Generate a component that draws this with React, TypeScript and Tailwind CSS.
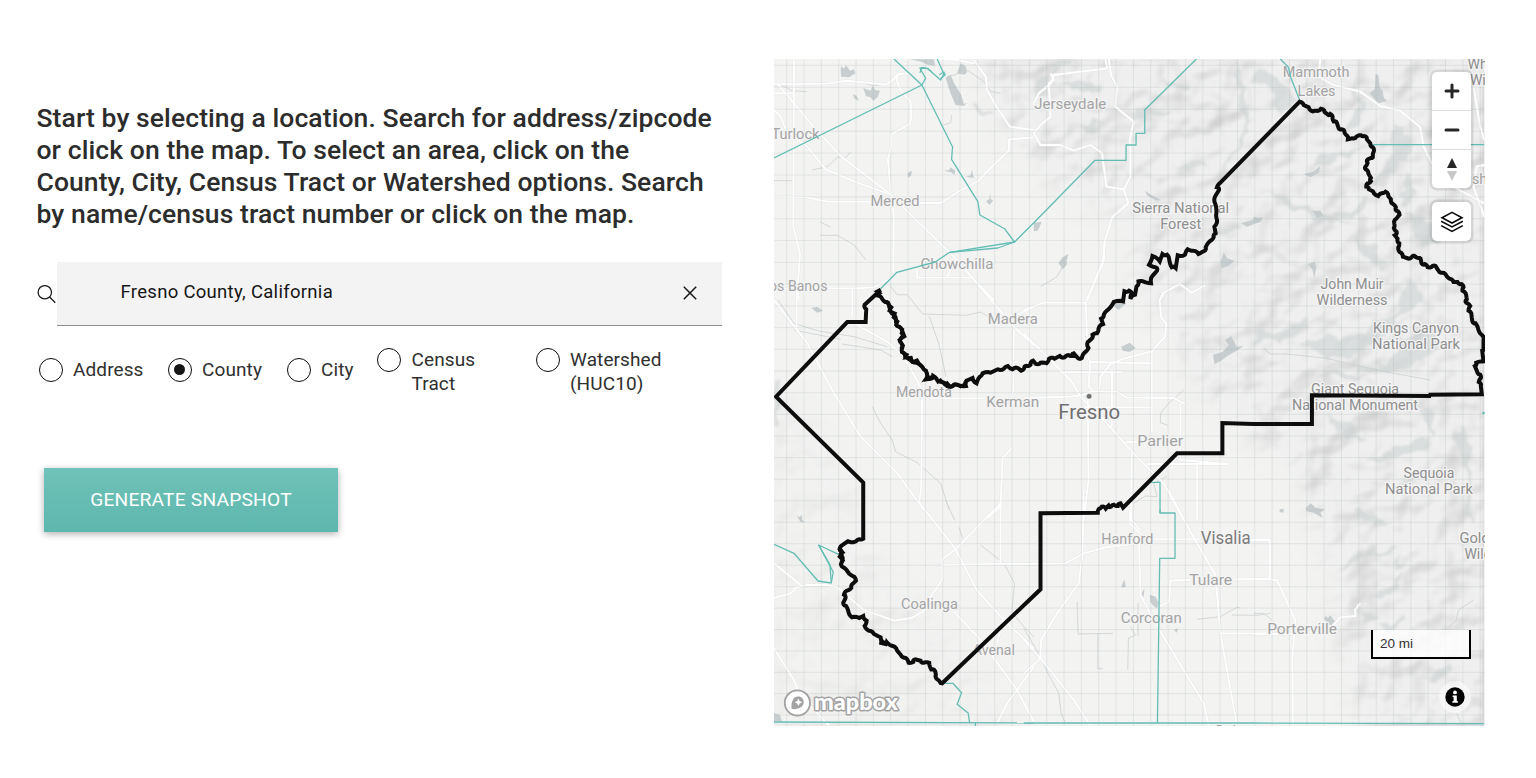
import React from 'react';

type Pt = [number, number];

/* Sheet coordinates are three units per pixel, measured from the sheet's origin. */
const sheet = (ox: number, oy: number, s: string): Pt[] =>
  s.trim().split(/\s+/).map((p) => {
    const [x, y] = p.split(',').map(Number);
    return [ox + x / 3, oy + y / 3] as Pt;
  });

const toPath = (pts: Pt[]) => 'M' + pts.map((p) => `${p[0].toFixed(1)} ${p[1].toFixed(1)}`).join('L');
const line = (ox: number, oy: number, s: string) => toPath(sheet(ox, oy, s));

/* Adds small bends to the short segments that follow rivers and ridges. */
const rough = (pts: Pt[]): Pt[] => {
  const out: Pt[] = [];
  pts.forEach((p, i) => {
    out.push(p);
    const q = pts[i + 1];
    if (!q) return;
    const dx = q[0] - p[0];
    const dy = q[1] - p[1];
    const len = Math.hypot(dx, dy);
    if (len > 2.6 && len < 9.5) {
      [0.35, 0.7].forEach((t, k) => {
        const j = (((i * 7 + k * 5) % 5) - 2) * 0.42;
        out.push([p[0] + dx * t - (dy / len) * j, p[1] + dy * t + (dx / len) * j]);
      });
    }
  });
  return out;
};

const BOUNDARY = toPath(
  rough([
    ...sheet(1254, 50, '138,155 150,165 165,172 178,184 192,183 202,176 213,186 222,193 230,192 237,200 240,214 250,219 254,232 264,238 272,243 277,254 283,268 295,265 308,260 322,256 332,258 340,268 350,280 358,292 361,304 358,318 352,324 343,328 342,338 335,350 336,358 344,370 352,384 352,394 342,400 338,410 346,418 358,424 374,438 384,430 396,425 404,438 412,448 418,462 427,472 428,482 438,494 428,506 422,520 421,534 429,545 424,556 432,566 437,580 434,592 438,606 448,620 460,624 474,622 482,617 494,624 502,630 504,640 514,642 522,651 534,651 546,648 555,662 567,668 577,674 588,686'),
    ...sheet(1254, 280, '600,6 612,6 624,12 630,22 627,32 638,46 640,58 638,68 650,78 645,92 654,106 656,122 666,130 674,148 684,164 690,180 690,210 686,212 690,244 668,248 664,258 670,272 680,284 682,294 676,306 682,318 685,343 526,344 532,348 175,346 175,432'),
    ...sheet(1024, 240, '690,552 596,549 596,640 460,640 298,803 290,790 282,798 270,794 262,800 254,797 246,806 234,800 226,806 222,818 50,820'),
    ...sheet(1024, 490, '50,298'),
    ...sheet(774, 500, '505,550 500,549 490,538 486,524 484,514 472,508 466,488 450,488 440,482 424,478 418,486 404,488 396,474 380,464 370,452 356,438 342,430 330,428 320,412 300,402 284,392 272,378 278,362 268,348 256,354 234,352 224,338 216,318 208,308 214,296 210,284 218,272 232,264 238,250 246,242 236,228 222,216 208,202 202,190 206,178 200,166 204,156 198,150 204,136 222,124 246,124 256,118 268,116'),
    ...sheet(774, 280, '268,608 6,350 220,126 275,126 277,88 272,74 320,30 310,46 322,52 334,66 344,72 348,88 360,104 366,118 370,138 384,150 390,166 378,184 386,200 384,216 394,230 410,240 428,248 446,262 456,272 458,298 470,296 478,288 490,300 504,306 520,318 526,320 540,314 556,316 576,318 578,302 596,294 608,310 618,290 626,280 650,278 672,268 690,266 702,258 716,268 732,264 742,272 752,260'),
    ...sheet(1024, 240, '10,378 20,374 28,362 36,372 50,368 68,370 76,356 92,356 108,348 122,352 134,345 146,348 150,340 162,354 174,354 182,338 194,324 192,306 202,298 206,284 220,280 224,266 238,252 232,236 240,224 254,208 270,186 298,184 302,154 316,152 324,160 320,176 334,164 338,140 344,124 358,124 382,130 386,108 400,92 396,82 376,74 386,48 408,64 416,42 430,44 436,56 444,82 456,84 462,46 484,44 492,28 508,32 524,42 540,34 546,22 558,4'),
    ...sheet(1034, 50, '540,562 546,550 542,530 550,510 548,490 545,462 544,440 556,420 550,412 558,400'),
  ]),
) + 'Z';

const DENSE = [
  line(774, 280, '320,28 308,34 318,40 306,48'),
  line(774, 280, '340,70 354,82 346,92 364,100 358,112 372,124 366,136 386,148 382,160 392,170 376,180 388,196 380,206'),
  line(774, 280, '384,216 400,224 394,234 412,232 416,246 430,240 440,258'),
  line(774, 280, '454,270 462,286 454,298 474,290 486,294 492,306 500,300 512,314 520,308 530,320 544,312 560,320 572,312 580,308'),
  line(774, 500, '322,414 320,430 336,434 338,424 346,434'),
  line(774, 500, '204,136 196,148 208,158 196,170 208,182 198,196'),
];

const COUNTIES = [
  line(774, 50, '0,324 444,105 360,27'),
  line(774, 50, '444,105 536,291 533,328 612,455 618,495 692,536 722,576 780,518'),
  line(774, 50, '722,576 527,607 484,636 369,667 320,716'),
  line(774, 50, '527,607 672,594 722,576'),
  line(774, 50, '444,105 455,85 438,54 462,56 500,90 510,72 490,27'),
  line(774, 50, '438,68 445,52 462,56 472,64'),
  line(774, 50, '496,74 510,66 514,74 500,86'),
  line(1034, 50, '0,518 184,331 277,331 277,285 307,285 307,250 333,250 333,180 488,27'),
  line(1254, 50, '80,27 104,52 112,84 138,150'),
  line(1254, 50, '356,284 692,284'),
  line(1024, 240, '382,727 409,727 409,820'),
  line(1024, 490, '409,60 409,69 454,69 454,205 408,205 401,699'),
  line(774, 500, '0,133 60,160 132,243 172,249 168,194 134,135 200,166 206,190'),
  line(774, 500, '134,135 178,216 172,249'),
  line(774, 500, '505,550 537,550 563,578 550,613 583,639 587,667'),
  line(774, 500, '0,666 780,669'),
  line(1024, 490, '0,699 691,699'),
  line(1254, 500, '0,669 692,671'),
];

const ROADS = [
  line(774, 50, '0,103 160,101 218,92 335,104 360,88 372,72 405,70 444,105'),
  line(774, 50, '0,180 20,200 36,240 100,290 155,358 245,396 345,432'),
  line(774, 50, '10,100 120,232 205,322 345,430 392,476 527,607 592,680 660,750'),
  line(774, 50, '60,30 58,530 78,610 72,700 74,750'),
  line(774, 50, '0,440 100,442 160,455 290,455'),
  line(774, 50, '436,459 500,459 562,420 615,392 640,365 705,302 706,268 780,262'),
  line(774, 50, '372,72 368,90 382,125 410,155 412,200 408,222 350,254 352,290 342,328 350,430 360,500 358,670'),
  line(774, 50, '600,30 636,80 640,120 668,170 708,230 780,240'),
  line(774, 50, '430,660 430,683 590,683'),
  line(774, 50, '540,640 520,680'),
  line(774, 50, '490,27 550,30 600,40'),
  line(774, 50, '100,715 235,715 300,712 350,685'),
  line(774, 50, '235,715 235,800'),
  line(774, 50, '0,130 60,130'),
  line(1034, 50, '215,27 220,55 60,75 52,100 15,130 0,160'),
  line(1034, 50, '50,70 60,90 45,100 50,200 20,225 0,250 20,285 80,285 120,302 170,285 205,310 218,410 270,418 284,460 236,500 214,570 208,630 160,750'),
  line(1034, 50, '225,27 232,75 250,110 245,170 300,215 288,270 290,300 290,380 270,418'),
  line(1254, 50, '200,27 195,80 240,105 320,125 380,168 440,182 500,232 510,290 535,340 600,410 692,460'),
  line(1254, 50, '660,110 680,230 692,270'),
  line(1254, 50, '692,500 660,410 670,350 692,345'),
  line(774, 280, '0,60 100,190 180,340 260,470 370,580 450,690'),
  line(774, 280, '68,30 68,150'),
  line(774, 280, '0,30 60,22 130,24'),
  line(774, 280, '240,130 340,185 390,230 445,330 442,620 436,670'),
  line(774, 280, '470,355 630,355'),
  line(774, 280, '600,0 720,140 780,195'),
  line(774, 280, '720,150 718,330 712,360'),
  line(774, 280, '780,80 730,104'),
  line(774, 280, '712,506 686,535 680,680 640,715'),
  line(1024, 240, '0,212 60,188 186,188 240,66 242,0'),
  line(1024, 240, '186,188 192,350 200,366 194,440 205,450'),
  line(1024, 240, '0,280 140,420 172,472 240,540 330,640 420,730 480,840'),
  line(1024, 240, '0,474 140,470 172,466 205,454 280,456 306,472 450,474 484,492'),
  line(1024, 240, '200,366 384,370'),
  line(1024, 240, '110,396 296,396'),
  line(1024, 240, '544,136 504,158 468,132 420,158 408,180 412,232 428,250 424,290 384,334 300,356 262,370 230,410 226,450'),
  line(1024, 240, '384,334 384,580'),
  line(1024, 240, '265,390 264,560'),
  line(1024, 240, '180,502 384,502'),
  line(1024, 240, '305,606 340,606'),
  line(1024, 240, '192,480 194,720 180,840'),
  line(1024, 240, '324,640 322,840 350,870'),
  line(1024, 240, '470,490 470,660 610,672 370,672'),
  line(1024, 240, '520,672 520,840'),
  line(774, 500, '430,0 545,148 610,272 690,360 780,445'),
  line(774, 500, '680,10 545,148 505,178 505,240 470,290 470,320 414,354 360,362 270,330 190,262 160,255 100,255 66,262 50,280 0,294'),
  line(774, 500, '0,190 80,255'),
  line(774, 500, '505,195 680,192 780,192'),
  line(774, 500, '680,0 680,192'),
  line(774, 500, '540,335 620,420 730,570 780,665'),
  line(774, 500, '780,500 730,570 700,610 670,669'),
  line(774, 500, '690,350 670,430'),
  line(774, 500, '0,445 60,540 80,590 165,676'),
  line(1024, 490, '0,450 50,505 150,630 200,707'),
  line(1024, 490, '0,550 50,505 52,450 100,370 165,280 176,190 180,0'),
  line(1024, 490, '0,222 125,220 180,190 245,172 346,160 350,315 410,425 540,640 555,707'),
  line(1024, 490, '318,60 320,102 350,130'),
  line(1024, 490, '380,148 530,148'),
  line(1024, 490, '434,0 500,125 575,255 590,430 640,707'),
  line(1024, 490, '680,150 738,150 738,265 630,268'),
  line(1024, 490, '500,270 440,272 436,335 405,350'),
  line(1024, 490, '590,430 730,430'),
  line(1254, 500, '0,118 48,118 48,238 0,238'),
  line(1254, 500, '48,238 70,240 125,360 116,480 118,676'),
  line(1254, 500, '0,402 120,402'),
  line(1254, 500, '235,380 260,352 306,348 304,330 320,310'),
];

const STREAMS = [
  line(774, 50, '0,107 30,108 52,122 100,125'),
  line(774, 50, '250,94 300,108 340,100'),
  line(774, 50, '115,360 160,350 190,322 216,322 230,306'),
  line(774, 50, '0,392 55,392'),
  line(774, 50, '138,515 170,532'),
  line(774, 50, '138,556 190,556 240,584 276,630'),
  line(774, 50, '534,195 530,218 508,225'),
  line(774, 280, '346,14 370,44 400,44 446,102 580,106 620,96 640,108'),
  line(774, 280, '466,108 494,190 508,250 516,290'),
  line(774, 280, '12,60 60,130 130,152 240,170 340,200'),
  line(774, 280, '60,150 200,178'),
  line(774, 280, '205,192 320,210 355,230'),
  line(774, 280, '295,380 320,430 355,480 365,515 430,548 500,610 526,690'),
  line(774, 500, '515,0 542,60'),
  line(774, 500, '556,82 566,115'),
  line(774, 500, '620,135 690,190 722,250 714,335 750,380 780,410'),
  line(774, 50, '520,80 540,76 580,60 630,95 650,124 680,130'),
  line(1034, 50, '100,625 70,680 20,710'),
  line(1024, 240, '480,450 435,490 410,520 410,548 432,556'),
  line(1024, 240, '330,790 365,768 400,770 390,730 430,708'),
  line(1024, 490, '160,335 163,432 268,430'),
  line(1024, 490, '222,432 222,536 236,536'),
  line(1024, 490, '343,340 343,438'),
  line(1024, 490, '320,410 335,436 314,444 312,540'),
  line(1024, 490, '520,388 590,380 640,352 650,354'),
  line(1024, 490, '625,375 700,376 740,370'),
  line(1254, 500, '0,340 30,340 55,360'),
  line(1024, 490, '0,415 50,500 70,545 105,610 112,670 125,700'),
  line(1254, 280, '30,205 50,222 100,222 220,235 300,255 420,280 530,300'),
  line(1254, 500, '610,640 625,676'),
  line(1254, 500, '660,300 615,330 608,362 585,380'),
];

const LAKES = [
  line(774, 50, '200,60 202,48 210,56 216,45 222,54 228,62 240,58 244,70 226,82 202,80'),
  line(774, 50, '268,114 290,122 296,108 304,120 318,122 312,140 298,152 290,142 276,138'),
  line(774, 50, '236,132 248,138 255,152 242,146'),
  line(774, 50, '515,84 530,74 540,98 552,118 562,134 570,162 580,158 570,168 545,165 530,130'),
  line(774, 50, '406,28 480,28 484,48 460,44 445,36'),
  line(774, 50, '560,40 575,48 580,66 572,74 550,70'),
  line(774, 50, '402,368 414,362 412,376 402,384'),
  line(774, 50, '510,362 526,360 530,352 544,362 542,374 530,366'),
  line(774, 50, '576,380 590,376 594,360 600,384'),
  line(774, 50, '636,454 646,448 650,430 650,448 658,450 648,465'),
  line(774, 280, '112,84 130,80 148,92 130,98'),
  line(1034, 50, '0,518 24,515 12,542 0,544'),
  line(1034, 50, '74,640 86,622 104,612 98,632 100,642 88,658'),
  line(1034, 50, '334,422 352,434 382,450 370,452 342,438'),
  line(1034, 50, '622,520 648,512 686,500 684,514 640,530'),
  line(1034, 50, '560,636 570,608 580,624 602,632 584,648 564,655'),
  line(1024, 240, '292,320 318,308 336,324 318,336 298,332'),
  line(1024, 240, '568,344 596,336 616,316 604,300 622,288 640,320 660,318 632,336 614,346 590,364 572,372'),
  line(1024, 240, '266,194 290,182 308,190 284,210'),
  line(1254, 50, '366,72 374,74 378,110 388,124 390,142 400,154 374,160 348,130 364,118'),
  line(1254, 50, '150,372 178,366 200,348 196,368 170,382'),
  line(1254, 50, '176,482 200,482 210,498 190,504'),
  line(1254, 50, '0,500 24,506 16,518 0,516'),
  line(1254, 50, '162,642 184,636 188,650 182,684 176,658'),
  line(1254, 280, '78,688 90,686 90,698 78,696'),
  line(1254, 280, '156,684 172,670 186,684 214,688 200,698 208,714 180,698 158,694'),
  line(1254, 500, '206,350 212,356 216,346 222,354 230,346 236,354 246,366 236,380 222,370'),
  line(774, 500, '68,46 76,52 84,44 84,58 92,68 80,66 74,58'),
  line(774, 500, '0,640 18,645 24,664 0,664'),
  line(1024, 490, '292,292 302,268 306,292'),
  line(1024, 490, '352,312 362,296 360,318 354,326'),
  line(1024, 490, '378,314 396,320 404,340 400,356 386,344 380,336'),
  line(1024, 490, '450,420 462,415 460,428'),
];

const SHADES = [
  line(1034, 50, '0,110 60,70 50,40 95,30 160,27 80,50 30,130 0,140'),
  line(1034, 50, '70,100 140,90 210,110 200,125 120,118'),
  line(1034, 50, '300,190 370,178 415,188 380,200 310,204'),
  line(1034, 50, '600,27 630,90 628,130 652,190 640,260 590,330 560,400 580,330 620,270 636,220 606,120'),
  line(1034, 50, '140,230 180,205 200,215 165,250'),
  line(1034, 50, '540,545 600,530 620,542 580,558'),
  line(1034, 50, '390,80 430,100 480,110 440,120 400,105'),
  line(1034, 50, '420,350 470,330 520,345 470,365'),
  line(774, 50, '600,160 650,190 630,200 600,180'),
  line(1254, 50, '300,100 330,160 330,210 290,240 300,170'),
  line(1254, 50, '410,220 460,230 468,300 420,370 360,400 400,340 420,280'),
  line(1254, 50, '60,420 130,460 220,500 290,530 190,512 80,450'),
  line(1254, 50, '180,345 215,310 300,295 340,300 250,320 200,355'),
  line(1254, 50, '220,500 290,480 340,440 320,490 260,510'),
  line(1254, 50, '460,370 480,430 450,470 440,430'),
  line(1254, 50, '0,60 70,80 130,150 80,200 60,120 0,90'),
  line(1254, 50, '450,490 540,510 560,580 500,590'),
  line(1254, 50, '300,560 360,590 400,660 340,630'),
  line(1254, 280, '0,190 20,135 60,160 110,140 150,110 160,150 90,180 40,175 0,205'),
  line(1254, 280, '130,200 200,170 290,180 350,140 410,110 430,90 450,10 470,0 500,10 505,70 440,110 380,180 280,235 200,230'),
  line(1254, 280, '320,260 400,250 440,180 520,140 560,200 470,260 380,280 300,280'),
  line(1254, 280, '330,545 400,510 500,480 530,470 520,510 430,530 370,550'),
  line(1254, 280, '500,380 545,400 540,470 520,430'),
  line(1254, 280, '620,430 650,500 655,730 640,700 640,560 600,470'),
  line(1254, 280, '170,280 270,275 340,290 220,292'),
  line(1254, 280, '220,400 290,430 330,490 260,460'),
  line(1254, 500, '270,215 290,180 330,140 345,160 350,130 370,155 410,135 430,150 390,165 330,165 300,200'),
  line(1254, 500, '340,300 400,270 450,215 440,250 390,290'),
  line(1254, 500, '425,200 435,150 440,180 490,198'),
  line(1254, 500, '380,380 450,350 460,365 400,390'),
  line(1254, 500, '525,530 560,500 590,485 590,520 540,550'),
  line(1254, 500, '310,330 380,350 360,365'),
  line(1254, 500, '300,30 370,50 420,70 370,80 320,60'),
  line(774, 280, '0,290 18,290 15,420 0,430'),
];

type Label = { t: string; x: number; y: number; w: number; s?: number; c?: string; m?: boolean };

/* x is the centre of the label, y its baseline. */
const LABELS: Label[] = [
  { t: 'Mammoth', x: 1316.5, y: 77, w: 67 },
  { t: 'Lakes', x: 1317, y: 95.5, w: 38 },
  { t: 'Jerseydale', x: 1070.5, y: 108.5, w: 72 },
  { t: 'Turlock', x: 795.5, y: 138.5, w: 48 },
  { t: 'Merced', x: 895, y: 205.5, w: 49 },
  { t: 'Chowchilla', x: 957, y: 268.5, w: 73 },
  { t: 'Los Banos', x: 794.5, y: 290.5, w: 66 },
  { t: 'Madera', x: 1013, y: 324, w: 50 },
  { t: 'Mendota', x: 924, y: 396.5, w: 56 },
  { t: 'Kerman', x: 1013, y: 407, w: 53 },
  { t: 'Fresno', x: 1089.5, y: 418.3, w: 62, s: 20.5, c: '#6f6f6f' },
  { t: 'Parlier', x: 1160.5, y: 445.5, w: 46 },
  { t: 'Hanford', x: 1127.5, y: 543.5, w: 52 },
  { t: 'Visalia', x: 1226, y: 543.7, w: 50, s: 17.8, c: '#7c7c7c' },
  { t: 'Tulare', x: 1211, y: 585, w: 43 },
  { t: 'Corcoran', x: 1151.5, y: 623, w: 61 },
  { t: 'Coalinga', x: 929.5, y: 608.5, w: 57 },
  { t: 'Avenal', x: 994, y: 655, w: 42 },
  { t: 'Porterville', x: 1302.5, y: 634, w: 70 },
  { t: 'Bishop', x: 1482, y: 184, w: 44 },
  { t: 'Delano', x: 1238, y: 735.5, w: 44 },
  { t: 'Sierra National', x: 1181, y: 213, w: 97, m: true },
  { t: 'Forest', x: 1181, y: 229, w: 41, m: true },
  { t: 'John Muir', x: 1352.5, y: 289, w: 63, m: true },
  { t: 'Wilderness', x: 1352.5, y: 305, w: 71, m: true },
  { t: 'Kings Canyon', x: 1416.5, y: 332.5, w: 86, m: true },
  { t: 'National Park', x: 1416.5, y: 348.5, w: 88, m: true },
  { t: 'Giant Sequoia', x: 1355.5, y: 393.5, w: 88, m: true },
  { t: 'National Monument', x: 1355.5, y: 409.5, w: 126, m: true },
  { t: 'Sequoia', x: 1429.5, y: 477.5, w: 51, m: true },
  { t: 'National Park', x: 1429.5, y: 493.5, w: 88, m: true },
  { t: 'White', x: 1486, y: 69, w: 36, m: true },
  { t: 'Wild', x: 1484, y: 85, w: 27, m: true },
  { t: 'Golden', x: 1483, y: 542.5, w: 46, m: true },
  { t: 'Wild', x: 1478.5, y: 558.5, w: 27, m: true },
];

const COLS = Array.from({ length: 41 }, (_, i) => 786.7 + i * 17.35);
const ROWS = Array.from({ length: 31 }, (_, k) => 65.3 + 22 * k - 0.0115 * k * k);

function BaseMap() {
  return (
    <svg className="block h-full w-full" viewBox="774 59 711 667" preserveAspectRatio="none">
      <defs>
        <filter id="relief" x="0" y="0" width="100%" height="100%" colorInterpolationFilters="sRGB">
          <feTurbulence type="fractalNoise" baseFrequency="0.022 0.026" numOctaves={3} seed={11} />
          <feColorMatrix values="0 0 0 0 0  0 0 0 0 0  0 0 0 0 0  1 0 0 0 0" />
          <feGaussianBlur stdDeviation={0.8} />
          <feDiffuseLighting surfaceScale={16} diffuseConstant={1.14} lightingColor="#ffffff">
            <feDistantLight azimuth={225} elevation={60} />
          </feDiffuseLighting>
          <feGaussianBlur stdDeviation={0.8} />
          <feColorMatrix values="0.13 0 0 0 0.806  0 0.13 0 0 0.807  0 0 0.13 0 0.806  0 0 0 1 0" />
        </filter>
        <filter id="soft" x="-20%" y="-20%" width="140%" height="140%">
          <feGaussianBlur stdDeviation={14} />
        </filter>
        <filter id="fine" filterUnits="userSpaceOnUse" x="774" y="59" width="711" height="667" colorInterpolationFilters="sRGB">
          <feTurbulence type="fractalNoise" baseFrequency="0.07" numOctaves={2} seed={4} result="n" />
          <feDisplacementMap in="SourceGraphic" in2="n" scale={16} xChannelSelector="R" yChannelSelector="G" />
          <feGaussianBlur stdDeviation={0.8} />
        </filter>
        <mask id="mountains" maskUnits="userSpaceOnUse" x="774" y="59" width="711" height="667">
          <g filter="url(#soft)">
            <path fill="#fff" d="M975 30H1520V760H1375L1340 640L1330 560L1300 480L1250 430L1200 390L1175 330L1140 290L1130 220L1060 190L1000 120Z" />
            <path fill="#555" d="M740 380L790 390L850 480L860 540L900 580L960 650L1010 700L1000 760H740Z" />
          </g>
        </mask>
      </defs>

      <rect x="774" y="59" width="711" height="667" fill="#f3f3f2" />
      <rect x="774" y="59" width="711" height="667" filter="url(#relief)" mask="url(#mountains)" />
      <g fill="#cfd3d3" fillOpacity={0.62} filter="url(#fine)">
        {SHADES.map((d) => <path key={d} d={d + 'Z'} />)}
      </g>
      <g fill="#c3cacc" fillOpacity={0.9}>
        {LAKES.map((d) => <path key={d} d={d + 'Z'} />)}
      </g>
      <g fill="none" stroke="#cdd1d2" strokeWidth={0.8}>
        {STREAMS.map((d) => <path key={d} d={d} />)}
      </g>
      <g fill="none" stroke="#e8e8e8" strokeWidth={2.8} strokeLinejoin="round">
        {ROADS.map((d) => <path key={d} d={d} />)}
      </g>
      <g fill="none" stroke="#ffffff" strokeWidth={1.8} strokeLinejoin="round">
        {ROADS.map((d) => <path key={d} d={d} />)}
      </g>
      <g stroke="#8fa39f" strokeOpacity={0.2} strokeWidth={0.9}>
        {COLS.map((x) => <line key={x} x1={x} x2={x} y1={59} y2={726} />)}
        {ROWS.map((y) => <line key={y} x1={774} x2={1485} y1={y} y2={y} />)}
      </g>

      <g
        fontFamily="Roboto, 'Liberation Sans', sans-serif"
        textAnchor="middle"
        stroke="#f5f5f5"
        strokeOpacity={0.9}
        strokeWidth={2.6}
        strokeLinejoin="round"
        paintOrder="stroke"
      >
        {LABELS.map((l, i) => (
          <text
            key={i}
            x={l.x}
            y={l.y + 0.4}
            textLength={l.w}
            lengthAdjust="spacingAndGlyphs"
            fontSize={l.s ?? (l.m ? 14.2 : 14.8)}
            fontWeight={400}
            fill={l.c ?? (l.m ? '#8e8e8e' : '#a3a3a3')}
          >
            {l.t}
          </text>
        ))}
      </g>
      <circle cx="1089.3" cy="396.3" r="2.8" fill="#6f6f6f" stroke="#fff" strokeWidth={0.6} />

      <g fill="none" stroke="#63bdb3" strokeWidth={1.3} strokeLinejoin="round">
        {COUNTIES.map((d) => <path key={d} d={d} />)}
        <path d="M975.5 723V726" />
      </g>
      <circle cx="1484" cy="413" r="1.3" fill="#63bdb3" />
      <g fill="none" stroke="#0d0d0d" strokeLinejoin="miter">
        <path d={BOUNDARY} strokeWidth={4} strokeMiterlimit={3} />
        {DENSE.map((d) => <path key={d} d={d} strokeWidth={3} />)}
      </g>
    </svg>
  );
}

function MapboxLogo() {
  return (
    <svg className="absolute bottom-[5px] left-[8px]" width="120" height="34" viewBox="0 0 120 34">
      <circle cx="15.4" cy="15.9" r="12.6" fill="#fff" stroke="#a3a3a3" strokeWidth="1.8" />
      <path
        d="M9.7 22.1C9.1 18.3 9.4 14.5 11.4 11.9C13.5 9.3 17.5 8.7 20 11.1C22.6 13.6 22.2 17.4 19.8 19.5C17.1 21.8 13.4 22.4 9.7 22.1Z"
        fill="#a3a3a3"
      />
      <path d="M16.4 11.5L17.6 14.1L20.2 15.3L17.6 16.5L16.4 19.1L15.2 16.5L12.6 15.3L15.2 14.1Z" fill="#fff" />
      <text
        x="32"
        y="22.6"
        fontFamily="Lato, 'Open Sans', sans-serif"
        fontWeight={900}
        fontSize="22.5"
        textLength="84"
        lengthAdjust="spacingAndGlyphs"
        fill="#fff"
        stroke="#a3a3a3"
        strokeWidth="3"
        strokeLinejoin="round"
        paintOrder="stroke"
      >
        mapbox
      </text>
    </svg>
  );
}

function MapControls() {
  return (
    <div className="absolute top-[13px] right-[13.5px] flex w-[39px] flex-col gap-[14px]">
      <div className="flex h-[116px] flex-col divide-y divide-[#ddd] rounded-[5px] bg-white shadow-[0_0_0_2.5px_rgba(0,0,0,0.1)]">
        <button aria-label="Zoom in" className="flex flex-1 items-center justify-center">
          <svg width="16" height="16" viewBox="0 0 16 16" stroke="#262626" strokeWidth="3" strokeLinecap="round">
            <path d="M8 2V14M2 8H14" />
          </svg>
        </button>
        <button aria-label="Zoom out" className="flex flex-1 items-center justify-center">
          <svg width="16" height="16" viewBox="0 0 16 16" stroke="#262626" strokeWidth="3" strokeLinecap="round">
            <path d="M2 8H14" />
          </svg>
        </button>
        <button aria-label="Reset bearing" className="flex flex-1 items-center justify-center">
          <svg width="12" height="24" viewBox="0 0 12 24">
            <path d="M1 11L6 1L11 11Z" fill="#262626" />
            <path d="M1 14L6 24L11 14Z" fill="#c8c8c8" />
          </svg>
        </button>
      </div>
      <button
        aria-label="Layers"
        className="flex h-[39px] items-center justify-center rounded-[5px] bg-white shadow-[0_0_0_2.5px_rgba(0,0,0,0.1)]"
      >
        <svg width="24" height="22" viewBox="0 0 24 22" fill="none" stroke="#0d0d0d" strokeWidth="1.6">
          <path d="M12 1.4L22 6.7L12 12L2 6.7Z" />
          <path d="M1.2 10.2L12 15.9L22.8 10.2" />
          <path d="M1.2 14.6L12 20.4L22.8 14.6" />
        </svg>
      </button>
    </div>
  );
}

function RadioOption({ label, checked = false }: { label: React.ReactNode; checked?: boolean }) {
  return (
    <label className="flex items-start gap-[10.5px]">
      <span className="flex size-6 shrink-0 items-center justify-center rounded-full border-[1.25px] border-[#0d0d0d]">
        {checked && <span className="size-[11px] rounded-full bg-[#161616]" />}
      </span>
      <span className="text-[19px] leading-6 tracking-[0.1px] whitespace-nowrap text-[#303030]">{label}</span>
    </label>
  );
}

export default function App() {
  return (
    <main className="flex h-[778px] w-[1536px] items-start overflow-hidden bg-white font-[Roboto,'Liberation_Sans',sans-serif]">
      <section className="w-[774px] shrink-0 pt-[102px] pl-[36.5px]">
        <h1 className="text-[26.5px] leading-8 font-medium tracking-[0.08px] whitespace-nowrap text-[#2c2c2c]">
          Start by selecting a location. Search for address/zipcode
          <br />
          or click on the map. To select an area, click on the
          <br />
          County, City, Census Tract or Watershed options. Search
          <br />
          by name/census tract number or click on the map.
        </h1>

        <div className="mt-[31.5px] flex items-center">
          <svg className="shrink-0" width="20" height="20" viewBox="0 0 20 20" fill="none" stroke="#161616" strokeWidth="1.25">
            <circle cx="7.8" cy="8.2" r="6.7" />
            <path d="M12.6 13L18.3 18.7" />
          </svg>
          <div className="flex h-[64px] w-[665.5px] items-center justify-between border-b-[1.5px] border-[#8d8d8d] bg-[#f3f3f3] pr-[25px] pl-[64px]">
            <span className="text-[18.5px] tracking-[0.3px] text-[#161616]">Fresno County, California</span>
            <svg width="14" height="14" viewBox="0 0 14 14" stroke="#161616" strokeWidth="1.5">
              <path d="M0.8 0.8L13.2 13.2M13.2 0.8L0.8 13.2" />
            </svg>
          </div>
        </div>

        <div className="mt-[22px] flex h-12 items-start pl-[2px]">
          <div className="w-[129px] pt-[10px]"><RadioOption label="Address" /></div>
          <div className="w-[119px] pt-[10px]"><RadioOption label="County" checked /></div>
          <div className="w-[90.5px] pt-[10px]"><RadioOption label="City" /></div>
          <div className="w-[158.5px]"><RadioOption label={<>Census<br />Tract</>} /></div>
          <RadioOption label={<>Watershed<br />(HUC10)</>} />
        </div>

        <button className="mt-[72.5px] ml-[7.5px] flex h-[64px] w-[294px] items-center justify-center bg-linear-to-b from-[#6fc2b8] to-[#5eb7ad] text-[19.2px] tracking-[0.2px] text-white shadow-[0_2px_7px_rgba(0,0,0,0.32)]">
          GENERATE SNAPSHOT
        </button>
      </section>

      <section className="relative mt-[59px] h-[667px] w-[710.5px] shrink-0 overflow-hidden">
        <BaseMap />
        <MapControls />
        <div className="absolute right-[13.5px] bottom-[67px] flex h-[29px] w-[100px] items-center border-[2.5px] border-t-0 border-black bg-white/75 pt-[2px] pl-[7px] font-['Liberation_Sans',sans-serif] text-[13.5px] text-[#333]">
          20 mi
        </div>
        <div className="absolute right-[13.5px] bottom-[13px] flex size-8 items-center justify-center rounded-full bg-white/50">
          <svg width="20" height="20" viewBox="0 0 20 20">
            <circle cx="10" cy="10" r="9.7" fill="#000" />
            <circle cx="10" cy="5.4" r="1.9" fill="#fff" />
            <path d="M7.6 8.4H11.8V14H12.8V15.8H7.4V14H8.6V10H7.6Z" fill="#fff" />
          </svg>
        </div>
        <MapboxLogo />
      </section>
    </main>
  );
}
